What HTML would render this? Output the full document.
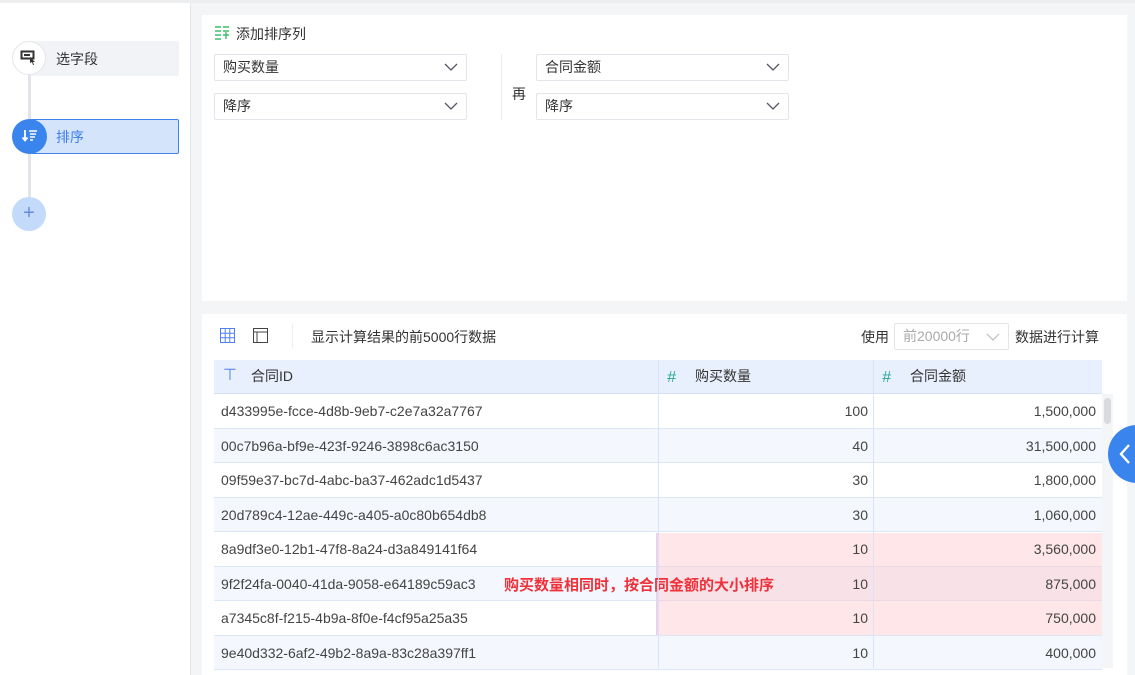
<!DOCTYPE html><html><head><meta charset="utf-8"><style>
*{box-sizing:border-box;margin:0;padding:0}
body{width:1135px;height:675px;overflow:hidden;background:#f4f5f7;font-family:"Liberation Sans","Noto Sans CJK SC",sans-serif;font-size:14px;color:#333;position:relative}
.abs{position:absolute}
.sel{position:absolute;height:27px;border:1px solid #e3e5ea;border-radius:2px;background:#fff;padding-left:8px;line-height:25px;font-size:13px;color:#333}
.sel svg{position:absolute;right:8px;top:8px}
.row{position:absolute;left:214px;width:888px;height:34.5px;border-bottom:1px solid #dbe6f7}
.row div{position:absolute;top:0;height:34px;line-height:34px;font-size:14px;color:#444}
.hd{position:absolute;top:360px;height:34px;line-height:34px;font-size:14px;color:#333}
</style></head><body>
<div class="abs" style="left:0;top:0;width:1135px;height:3px;background:#eceef0"></div>
<div class="abs" style="left:0;top:3px;width:191px;height:672px;background:#fff;border-right:1px solid #e6e7ea"></div>
<div class="abs" style="left:28px;top:60px;width:3px;height:155px;background:#e2e4e8"></div>
<div class="abs" style="left:30px;top:41px;width:149px;height:35px;background:#f2f3f6;border-radius:2px"></div>
<div class="abs" style="left:12px;top:41px;width:34px;height:34px;border-radius:50%;background:#fff;border:1px solid #e3e5ea"></div>
<svg class="abs" style="left:20px;top:50px" width="18" height="16"><rect x="1.5" y="1.5" width="12" height="7" fill="none" stroke="#333" stroke-width="2"/><rect x="4" y="4" width="6" height="2" fill="#333"/><path d="M10 7l5 5-2 0 1 3-1 0-1-3-2 1z" fill="#333"/></svg>
<div class="abs" style="left:56px;top:49px;font-size:14px;color:#333">选字段</div>
<div class="abs" style="left:30px;top:119px;width:149px;height:35px;background:#d4e4fb;border:1px solid #3d84f0;border-radius:2px"></div>
<div class="abs" style="left:12px;top:119px;width:35px;height:35px;border-radius:50%;background:#3a84ee"></div>
<svg class="abs" style="left:22px;top:129px" width="16" height="14"><path d="M3 1v10M0.5 8.5L3 11.5 5.5 8.5" stroke="#fff" stroke-width="1.8" fill="none"/><path d="M7 2h8M8 5h6M8 8h5M8 11h3" stroke="#fff" stroke-width="1.5"/></svg>
<div class="abs" style="left:56px;top:127px;color:#3f7ee8;font-size:14px">排序</div>
<div class="abs" style="left:12px;top:197px;width:34px;height:34px;border-radius:50%;background:#c4dafb;color:#6a8ad8;font-size:20px;line-height:32px;text-align:center">+</div>

<div class="abs" style="left:202px;top:15px;width:925px;height:286px;background:#fff"></div>
<svg class="abs" style="left:214px;top:25px" width="17" height="15"><path d="M1 2h6M9 2h6M1 6h6M9 6h6M1 10h6M1 14h6M9 10h6M12 7v7" stroke="#3cbf6a" stroke-width="1.4"/></svg>
<div class="abs" style="left:236px;top:24px;font-size:14px;color:#333">添加排序列</div>
<div class="sel" style="left:214px;top:54px;width:253px;font-size:14px">购买数量<svg width="14" height="9"><path d="M1 1l6 6 6-6" stroke="#556" stroke-width="1.3" fill="none"/></svg></div>
<div class="sel" style="left:214px;top:93px;width:253px;font-size:14px">降序<svg width="14" height="9"><path d="M1 1l6 6 6-6" stroke="#556" stroke-width="1.3" fill="none"/></svg></div>
<div class="abs" style="left:501px;top:54px;width:1px;height:66px;background:#eceef1"></div>
<div class="abs" style="left:512px;top:84px">再</div>
<div class="sel" style="left:536px;top:54px;width:253px;font-size:14px">合同金额<svg width="14" height="9"><path d="M1 1l6 6 6-6" stroke="#556" stroke-width="1.3" fill="none"/></svg></div>
<div class="sel" style="left:536px;top:93px;width:253px;font-size:14px">降序<svg width="14" height="9"><path d="M1 1l6 6 6-6" stroke="#556" stroke-width="1.3" fill="none"/></svg></div>

<div class="abs" style="left:202px;top:314px;width:925px;height:361px;background:#fff"></div>
<svg class="abs" style="left:220px;top:328px" width="15" height="15"><rect x="0.5" y="0.5" width="14" height="14" fill="none" stroke="#4f7ff0"/><path d="M0 5.2h15M0 9.8h15M5.2 0v15M9.8 0v15" stroke="#4f7ff0"/></svg>
<svg class="abs" style="left:253px;top:328px" width="15" height="15"><rect x="0.5" y="0.5" width="14" height="14" fill="none" stroke="#444"/><path d="M0 4h15M4 4v11" stroke="#444"/></svg>
<div class="abs" style="left:292px;top:324px;width:1px;height:24px;background:#eceef1"></div>
<div class="abs" style="left:311px;top:327px">显示计算结果的前5000行数据</div>
<div class="abs" style="left:861px;top:327px">使用</div>
<div class="sel" style="left:894px;top:323px;width:115px;color:#aaa;font-size:14px">前20000行<svg width="14" height="9" style="top:9px"><path d="M1 1l6 6 6-6" stroke="#bbb" stroke-width="1.2" fill="none"/></svg></div>
<div class="abs" style="left:1015px;top:327px">数据进行计算</div>

<div class="abs" style="left:214px;top:360px;width:888px;height:34px;background:#e8f0fd;border-bottom:1px solid #d5e2f6"></div>
<div class="hd" style="left:223px;color:#4f7ff0;font-size:16px;top:359px">⊤</div>
<div class="hd" style="left:251px;top:359px">合同ID</div>
<div class="hd" style="left:667px;color:#2aa79a;font-size:16px;font-style:italic;top:361px">#</div>
<div class="hd" style="left:695px;top:359px">购买数量</div>
<div class="hd" style="left:882px;color:#2aa79a;font-size:16px;font-style:italic;top:361px">#</div>
<div class="hd" style="left:910px;top:359px">合同金额</div>

<div class="row" style="top:394px;background:#fff"><div style="left:7px">d433995e-fcce-4d8b-9eb7-c2e7a32a7767</div><div style="right:234px">100</div><div style="right:6px">1,500,000</div></div>
<div class="row" style="top:428.5px;background:#f4f7fd"><div style="left:7px">00c7b96a-bf9e-423f-9246-3898c6ac3150</div><div style="right:234px">40</div><div style="right:6px">31,500,000</div></div>
<div class="row" style="top:463px;background:#fff"><div style="left:7px">09f59e37-bc7d-4abc-ba37-462adc1d5437</div><div style="right:234px">30</div><div style="right:6px">1,800,000</div></div>
<div class="row" style="top:497.5px;background:#f4f7fd"><div style="left:7px">20d789c4-12ae-449c-a405-a0c80b654db8</div><div style="right:234px">30</div><div style="right:6px">1,060,000</div></div>
<div class="row" style="top:532px;background:#fff"><div style="left:7px">8a9df3e0-12b1-47f8-8a24-d3a849141f64</div></div>
<div class="row" style="top:566.5px;background:#f4f7fd"><div style="left:7px">9f2f24fa-0040-41da-9058-e64189c59ac3</div></div>
<div class="row" style="top:601px;background:#fff"><div style="left:7px">a7345c8f-f215-4b9a-8f0e-f4cf95a25a35</div></div>
<div class="row" style="top:635.5px;background:#f4f7fd"><div style="left:7px">9e40d332-6af2-49b2-8a9a-83c28a397ff1</div><div style="right:234px">10</div><div style="right:6px">400,000</div></div>
<div class="abs" style="left:656px;top:533px;width:446px;height:102px;background:rgba(255,200,205,0.45);border-left:2px solid #e8d4e6"></div>
<div class="abs" style="left:659px;top:532px;width:209px;line-height:34px;text-align:right;color:#444">10</div>
<div class="abs" style="left:874px;top:532px;width:222px;line-height:34px;text-align:right;color:#444">3,560,000</div>
<div class="abs" style="left:659px;top:566.5px;width:209px;line-height:34px;text-align:right;color:#444">10</div>
<div class="abs" style="left:874px;top:566.5px;width:222px;line-height:34px;text-align:right;color:#444">875,000</div>
<div class="abs" style="left:659px;top:601px;width:209px;line-height:34px;text-align:right;color:#444">10</div>
<div class="abs" style="left:874px;top:601px;width:222px;line-height:34px;text-align:right;color:#444">750,000</div>
<div class="abs" style="left:504px;top:574px;color:#f0303a;font-weight:bold;font-size:15px">购买数量相同时，按合同金额的大小排序</div>
<div class="abs" style="left:658px;top:360px;width:1px;height:308px;background:#d8e5f8"></div>
<div class="abs" style="left:873px;top:360px;width:1px;height:308px;background:#d8e5f8"></div>

<div class="abs" style="left:1102px;top:394px;width:11px;height:274px;background:#f4f5f7"></div>
<div class="abs" style="left:1104px;top:398px;width:7px;height:26px;background:#d8dade;border-radius:4px"></div>
<div class="abs" style="left:1108px;top:425px;width:58px;height:58px;border-radius:50%;background:#3a84ee"></div>
<svg class="abs" style="left:1118px;top:443px" width="14" height="22"><path d="M11 2L3 11l8 9" stroke="#fff" stroke-width="2.4" fill="none"/></svg>
</body></html>
